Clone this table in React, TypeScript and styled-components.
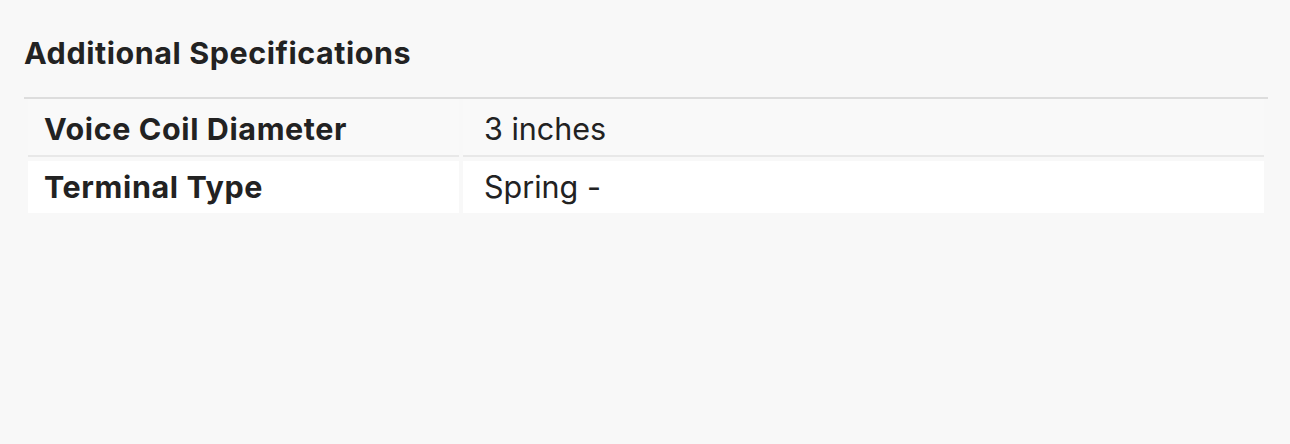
import styled, { createGlobalStyle } from 'styled-components';

const GlobalStyle = createGlobalStyle`
  html, body {
    margin: 0;
    padding: 0;
    background: #f8f8f8;
  }
  body {
    font-family: Inter, 'Noto Sans', sans-serif;
    color: #222222;
  }
`;

const Section = styled.section`
  padding: 36px 22px 0 24px;
`;

const Title = styled.h2`
  margin: 0 0 27px 0;
  font-size: 30.5px;
  font-weight: 700;
  line-height: 34px;
  letter-spacing: 0.55px;
`;

const Table = styled.div`
  display: flex;
  flex-direction: column;
  gap: 4px;
  border-top: 2px solid #dddddd;
  padding: 0 4px 4px;
`;

const Row = styled.div`
  display: grid;
  grid-template-columns: 431px 1fr;
  gap: 4px;
`;

const Cell = styled.div<{ $striped?: boolean; $bold?: boolean }>`
  padding: ${(p) => (p.$striped ? '13px 0 9px' : '9px 0 9px')};
  padding-left: ${(p) => (p.$bold ? '16px' : '21px')};
  font-size: 30.5px;
  line-height: 34px;
  font-weight: ${(p) => (p.$bold ? 700 : 400)};
  letter-spacing: ${(p) => (p.$bold ? '0.6px' : '0')};
  background: ${(p) => (p.$striped ? '#f9f9f9' : '#ffffff')};
  border-bottom: ${(p) => (p.$striped ? '2px solid #e8e8e8' : 'none')};
`;

const specs = [
  { label: 'Voice Coil Diameter', value: '3 inches' },
  { label: 'Terminal Type', value: 'Spring -' },
];

export default function App() {
  return (
    <>
      <GlobalStyle />
      <Section>
        <Title>Additional Specifications</Title>
        <Table>
          {specs.map((s, i) => (
            <Row key={s.label}>
              <Cell $bold $striped={i % 2 === 0}>
                {s.label}
              </Cell>
              <Cell $striped={i % 2 === 0}>{s.value}</Cell>
            </Row>
          ))}
        </Table>
      </Section>
    </>
  );
}
